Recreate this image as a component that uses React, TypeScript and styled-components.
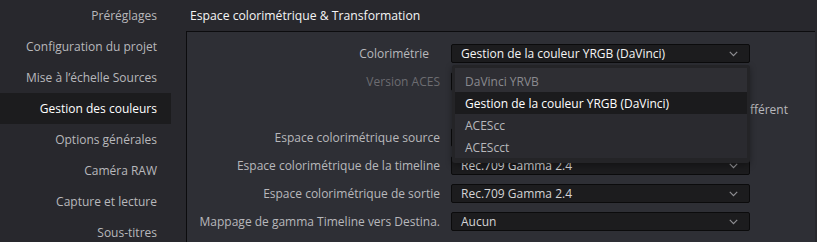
import React from "react";
import styled, { createGlobalStyle } from "styled-components";

const Global = createGlobalStyle`
  html, body { margin: 0; padding: 0; background: #28282d; }
  body { font-family: "Open Sans", "Noto Sans", sans-serif; -webkit-font-smoothing: antialiased; }
`;

const Shell = styled.div`
  display: flex;
  width: 817px;
  height: 242px;
  overflow: hidden;
  background: #28282d;
`;

const Sidebar = styled.nav`
  width: 171px;
  flex-shrink: 0;
  display: flex;
  flex-direction: column;
`;

const NavItem = styled.div<{ $active?: boolean }>`
  height: 31px;
  flex-shrink: 0;
  display: flex;
  align-items: center;
  justify-content: flex-end;
  padding-right: 14px;
  font-size: 12px;
  color: ${(p) => (p.$active ? "#ffffff" : "#b8b8bc")};
  background: ${(p) => (p.$active ? "#1c1c1e" : "transparent")};
  white-space: nowrap;
`;

const Main = styled.div`
  flex: 1;
  display: flex;
  flex-direction: column;
  padding-left: 15px;
  padding-right: 2px;
  min-width: 0;
`;

const Title = styled.div`
  height: 31px;
  flex-shrink: 0;
  display: flex;
  align-items: center;
  padding-left: 4px;
  font-size: 12.2px;
  color: #f4f4f4;
  white-space: nowrap;
`;

const Panel = styled.div`
  flex: 1;
  background: #2e2f35;
  border-top: 1px solid #0c0c0e;
  border-left: 1px solid #0c0c0e;
  padding-top: 12px;
  display: flex;
  flex-direction: column;
  gap: 9px;
`;

const Row = styled.div`
  display: grid;
  grid-template-columns: 253px 299px;
  column-gap: 11px;
  height: 19px;
  align-items: center;
`;

const Label = styled.div<{ $dim?: boolean; $inset?: number }>`
  text-align: right;
  font-size: 12px;
  color: ${(p) => (p.$dim ? "#6c6c71" : "#b8b8bc")};
  padding-right: ${(p) => p.$inset ?? 0}px;
  white-space: nowrap;
`;

const SelectWrap = styled.div`
  position: relative;
  height: 19px;
`;

const SelectBox = styled.div`
  box-sizing: border-box;
  height: 19px;
  border: 1px solid #0b0b0c;
  border-radius: 2px;
  background: #1c1c1e;
  display: flex;
  align-items: center;
  justify-content: space-between;
  padding: 0 11px 0 9px;
  font-size: 12px;
  color: #d4d4d6;
  white-space: nowrap;
`;

const SelectText = styled.span<{ $bright?: boolean }>`
  color: ${(p) => (p.$bright ? "#f4f4f4" : "#d4d4d6")};
`;

const CheckText = styled.div`
  width: 337px;
  text-align: right;
  font-size: 12px;
  color: #b8b8bc;
  white-space: nowrap;
`;

const Menu = styled.div`
  position: absolute;
  left: 1px;
  top: 21px;
  width: 298px;
  box-sizing: border-box;
  padding: 3px 3px 5px 3px;
  background: #242427;
  border-radius: 3px;
  box-shadow: 0 2px 6px rgba(0, 0, 0, 0.35);
  display: flex;
  flex-direction: column;
  z-index: 10;
`;

const MenuItem = styled.div<{ $kind: "disabled" | "selected" | "normal" }>`
  height: ${(p) => (p.$kind === "disabled" ? 24 : 22)}px;
  padding-top: ${(p) => (p.$kind === "disabled" ? 2 : 0)}px;
  box-sizing: border-box;
  display: flex;
  align-items: center;
  padding-left: 10px;
  font-size: 12px;
  white-space: nowrap;
  background: ${(p) =>
    p.$kind === "selected" ? "#1b1b1d" : p.$kind === "disabled" ? "#2e2e33" : "#2a2a2f"};
  color: ${(p) =>
    p.$kind === "selected" ? "#ffffff" : p.$kind === "disabled" ? "#8a8a8f" : "#b8b8bc"};
`;

const Chevron = () => (
  <svg width="9" height="6" viewBox="0 0 9 6" fill="none">
    <path d="M0.8 0.8 L4.5 4.6 L8.2 0.8" stroke="#8e8e92" strokeWidth="1.2" />
  </svg>
);

const Select: React.FC<{ value?: string; bright?: boolean; children?: React.ReactNode }> = ({
  value,
  bright,
  children,
}) => (
  <SelectWrap>
    <SelectBox>
      <SelectText $bright={bright}>{value}</SelectText>
      <Chevron />
    </SelectBox>
    {children}
  </SelectWrap>
);

const navItems = [
  "Préréglages",
  "Configuration du projet",
  "Mise à l’échelle Sources",
  "Gestion des couleurs",
  "Options générales",
  "Caméra RAW",
  "Capture et lecture",
  "Sous-titres",
];

export default function App() {
  return (
    <Shell>
      <Global />
      <Sidebar>
        {navItems.map((n) => (
          <NavItem key={n} $active={n === "Gestion des couleurs"}>
            {n}
          </NavItem>
        ))}
      </Sidebar>
      <Main>
        <Title>Espace colorimétrique &amp; Transformation</Title>
        <Panel>
          <Row>
            <Label $inset={11}>Colorimétrie</Label>
            <Select value="Gestion de la couleur YRGB (DaVinci)" bright>
              <Menu>
                <MenuItem $kind="disabled">DaVinci YRVB</MenuItem>
                <MenuItem $kind="selected">Gestion de la couleur YRGB (DaVinci)</MenuItem>
                <MenuItem $kind="normal">ACEScc</MenuItem>
                <MenuItem $kind="normal">ACEScct</MenuItem>
              </Menu>
            </Select>
          </Row>
          <Row>
            <Label $dim>Version ACES</Label>
            <Select />
          </Row>
          <Row>
            <Label />
            <CheckText>Utiliser un espace colorimétrique de sortie différent</CheckText>
          </Row>
          <Row>
            <Label>Espace colorimétrique source</Label>
            <Select />
          </Row>
          <Row>
            <Label>Espace colorimétrique de la timeline</Label>
            <Select value="Rec.709 Gamma 2.4" />
          </Row>
          <Row>
            <Label>Espace colorimétrique de sortie</Label>
            <Select value="Rec.709 Gamma 2.4" />
          </Row>
          <Row>
            <Label>Mappage de gamma Timeline vers Destina.</Label>
            <Select value="Aucun" />
          </Row>
        </Panel>
      </Main>
    </Shell>
  );
}
